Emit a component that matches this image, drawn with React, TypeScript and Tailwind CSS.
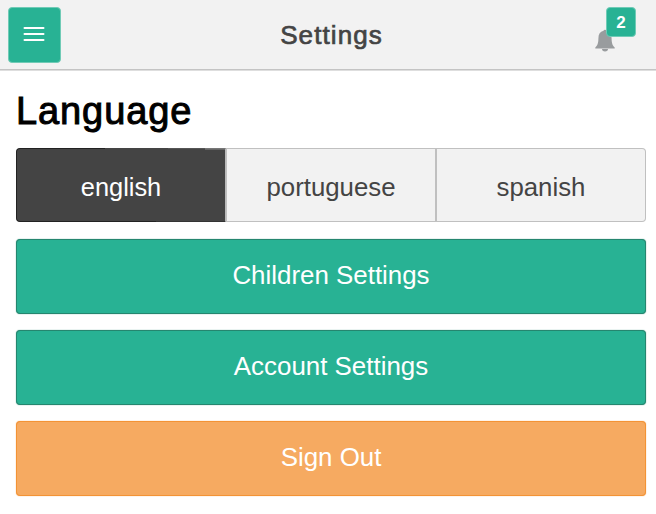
import type { ReactNode } from "react";

const languages = ["english", "portuguese", "spanish"];

function Action({ children, tone }: { children: ReactNode; tone: "green" | "orange" }) {
  const colors =
    tone === "green"
      ? "border-[#25866f] bg-[#28b294] shadow-[0_0_1px_#25866f]"
      : "border-[#f39335] bg-[#f6aa61] shadow-[0_0_1px_#f39335]";
  return (
    <button
      className={`flex h-[75px] w-[630px] items-center justify-center rounded-[4px] border pb-0.5 text-[25.9px] leading-none text-white ${colors}`}
    >
      {children}
    </button>
  );
}

export default function App() {
  return (
    <div className="h-[514px] w-[656px] overflow-hidden bg-white font-['Liberation_Sans',Arial,sans-serif]">
      <header className="flex h-[70px] items-start justify-between border-b border-[#c4c4c4] bg-[#f2f2f2] px-2 pt-[7px] shadow-[0_1px_0_#dedede]">
        <button
          aria-label="Menu"
          className="flex h-14 w-[53px] items-center justify-center rounded-[4px] border border-[#70cbb6] bg-[#28b294] pb-[2px] pr-[2px]"
        >
          <svg width="22" height="16" viewBox="0 0 22 16" fill="none" stroke="white" strokeWidth="2" strokeLinecap="round">
            <path d="M1.5 2h19M1.5 8h19M1.5 14h19" />
          </svg>
        </button>
        <h1 className="ml-[7px] pt-[14px] text-[26px] leading-[28px] tracking-[1.1px] text-[#444] [-webkit-text-stroke:0.7px_#444]">
          Settings
        </h1>
        <div className="relative mr-[13px] h-14 w-10">
          <svg className="absolute top-[22px] left-0" width="20" height="23" viewBox="0 0 20 23" fill="#999c9e">
            <path d="M8.5 1.8a1.6 1.6 0 0 1 3 0C15 2.7 16.6 5.300 16.600 9.500c0 5 1.200 7.300 3.100 9v1H.3v-1c1.900-1.700 3.100-4 3.100-9 0-4.200 1.600-6.800 5.100-7.700ZM7 20h6a3 2.400 0 0 1-6 0Z" />
          </svg>
          <span className="absolute top-0 left-[11px] flex h-[30px] w-[30px] items-center justify-center rounded-[4px] border border-[#70cbb6] bg-[#28b294] text-[17px] leading-none font-bold text-white">
            2
          </span>
        </div>
      </header>
      <main className="px-4">
        <h2 className="flex h-[78px] items-start pt-[19px] text-[38px] leading-[44px] tracking-[0.9px] text-black [-webkit-text-stroke:1px_black]">
          Language
        </h2>
        <div className="flex h-[74px] w-[630px]">
          {languages.map((language, index) => (
            <button
              key={language}
              className={`relative flex items-center justify-center pt-[5px] leading-none ${
                index === 0
                  ? "w-[210px] rounded-l-[4px] border border-[#222] border-r-[#b9b9b9] bg-[#444] text-[25.4px] text-white"
                  : index === 1
                    ? "w-[211px] border border-r-2 border-[#c0c0c0] bg-[#f2f2f2] text-[25.8px] text-[#444]"
                    : "w-[209px] rounded-r-[4px] border border-l-0 border-[#c0c0c0] bg-[#f2f2f2] text-[25.8px] text-[#444]"
              }`}
            >
              {index === 0 && (
                <>
                  <span className="absolute -top-px right-0 h-px w-[120px] bg-[linear-gradient(90deg,#444_63px,#555_63px,#555_100px,#777_100px)]" />
                  <span className="absolute top-0 right-0 h-px w-5 bg-[#666]" />
                  <span className="absolute right-0 -bottom-px h-px w-[69px] bg-[#333]" />
                </>
              )}
              {language}
            </button>
          ))}
        </div>
        <div className="flex flex-col gap-4 pt-[17px]">
          <Action tone="green">Children Settings</Action>
          <Action tone="green">Account Settings</Action>
          <Action tone="orange">Sign Out</Action>
        </div>
      </main>
    </div>
  );
}
